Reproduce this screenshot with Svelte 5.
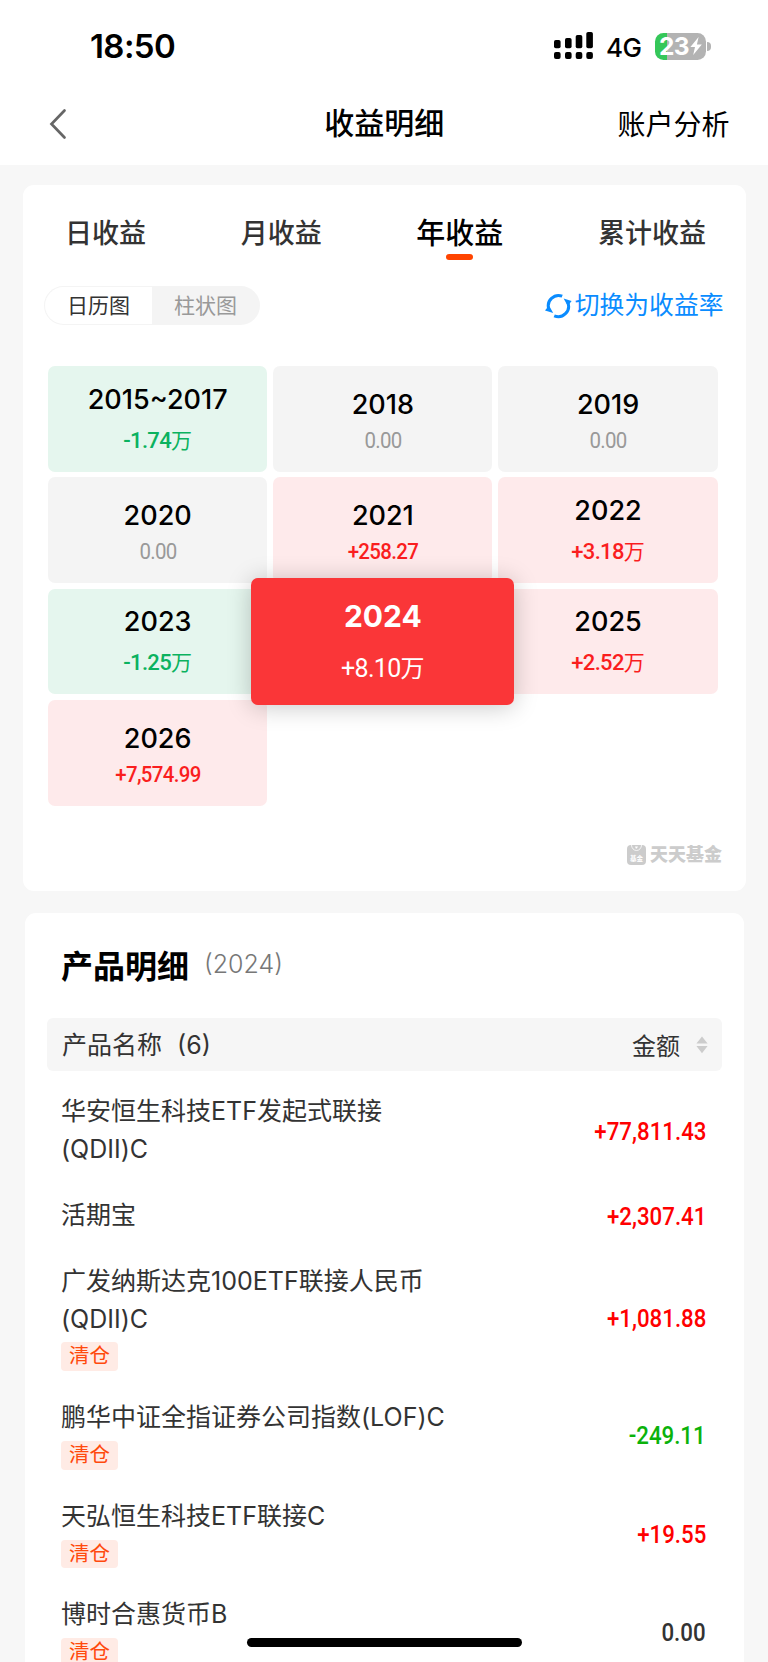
<script>
	let activeTab = "年收益";
	let chartMode = "日历图";
	let selectedYear = "2024";

	const tabs = ["日收益", "月收益", "年收益", "累计收益"];
	const modes = ["日历图", "柱状图"];

	const years = [
	  { label: "2015~2017", amount: "-1.74", unit: "万" },
	  { label: "2018", amount: "0.00" },
	  { label: "2019", amount: "0.00" },
	  { label: "2020", amount: "0.00" },
	  { label: "2021", amount: "+258.27" },
	  { label: "2022", amount: "+3.18", unit: "万" },
	  { label: "2023", amount: "-1.25", unit: "万" },
	  { label: "2024", amount: "+8.10", unit: "万" },
	  { label: "2025", amount: "+2.52", unit: "万" },
	  { label: "2026", amount: "+7,574.99" }
	];

	const products = [
	  { name: "华安恒生科技ETF发起式联接(QDII)C", amount: "+77,811.43" },
	  { name: "活期宝", amount: "+2,307.41" },
	  { name: "广发纳斯达克100ETF联接人民币(QDII)C", amount: "+1,081.88", cleared: true },
	  { name: "鹏华中证全指证券公司指数(LOF)C", amount: "-249.11", cleared: true },
	  { name: "天弘恒生科技ETF联接C", amount: "+19.55", cleared: true },
	  { name: "博时合惠货币B", amount: "0.00", cleared: true }
	];

	// "+" is a gain, "-" a loss, anything else is flat
	function trend(amount) {
	  if (amount.startsWith("+")) return "up";
	  if (amount.startsWith("-")) return "down";
	  return "flat";
	}
</script>

<main>
	<header>
	  <div class="status-bar">
		<span class="time">18:50</span>
		<div class="status-icons">
		  <svg class="signal" width="40" height="28" viewBox="0 0 40 28">
			<rect x="0" y="8" width="6.6" height="8.2" rx="1.8" />
			<rect x="11" y="6" width="6.6" height="10.2" rx="1.8" />
			<rect x="21.7" y="3" width="6.6" height="13.2" rx="1.8" />
			<rect x="32.3" y="0" width="6.6" height="16.2" rx="1.8" />
			<rect x="0" y="20" width="6.6" height="7" rx="2" />
			<rect x="11" y="20" width="6.6" height="7" rx="2" />
			<rect x="21.7" y="20" width="6.6" height="7" rx="2" />
			<rect x="32.3" y="20" width="6.6" height="7" rx="2" />
		  </svg>
		  <span class="network">4G</span>
		  <div class="battery">
			<div class="battery-body">
			  <span>23</span>
			  <svg width="12" height="18" viewBox="0 0 12 18">
				<path d="M8.6 0 L0.4 10 H5 L3.2 18 L11.8 7.4 H6.9 Z" fill="#fff" />
			  </svg>
			</div>
			<div class="battery-cap"></div>
		  </div>
		</div>
	  </div>
	  <div class="nav-bar">
		<button class="back" aria-label="返回">
		  <svg width="18" height="32" viewBox="0 0 18 32">
			<path d="M15.5 2.5 L2.5 16 L15.5 29.5" fill="none" stroke="#666" stroke-width="2.7" stroke-linecap="round" />
		  </svg>
		</button>
		<h1>收益明细</h1>
		<button class="analysis">账户分析</button>
	  </div>
	</header>

	<section class="card income">
	  <nav class="tabs">
		{#each tabs as tab}
		  <button class="tab" class:active={activeTab === tab} on:click={() => (activeTab = tab)}>{tab}</button>
		{/each}
	  </nav>

	  <div class="toolbar">
		<div class="modes">
		  {#each modes as mode}
			<button class="mode" class:active={chartMode === mode} on:click={() => (chartMode = mode)}>{mode}</button>
		  {/each}
		</div>
		<button class="switch">
		  <svg width="27" height="26" viewBox="0 0 27 26">
			<g fill="none" stroke="#0a8cff" stroke-width="3">
			  <path d="M3.8 16 A10.3 10.3 0 0 1 17.2 3.2" />
			  <path d="M22.8 9.5 A10.3 10.3 0 0 1 9.2 22.8" />
			</g>
			<path d="M0 17.6 L4 12.4 L8.2 20 Z" fill="#0a8cff" />
			<path d="M26.6 8 L18.6 5.4 L22.8 13 Z" fill="#0a8cff" />
		  </svg>
		  <span>切换为收益率</span>
		</button>
	  </div>

	  <div class="years">
		{#each years as year}
		  <button
			class="year {trend(year.amount)}"
			class:has-unit={year.unit}
			class:selected={selectedYear === year.label}
			on:click={() => (selectedYear = year.label)}
		  >
			<span class="label">{year.label}</span>
			<span class="value"><span class="num">{year.amount}</span>{#if year.unit}<span class="unit">{year.unit}</span>{/if}</span>
		  </button>
		{/each}
	  </div>

	  <div class="brand">
		<svg width="19" height="20" viewBox="0 0 19 20">
		  <rect width="19" height="20" rx="4" fill="#ccc" />
		  <path d="M4.5 0 A5 5.5 0 0 0 14.5 0" fill="none" stroke="#fff" stroke-width="0.8" />
		  <path d="M8 1.5 H11 L9.8 3.6 H8.8 Z" fill="#fff" />
		  <text x="9.5" y="15.6" font-size="6.5" font-weight="700" text-anchor="middle" fill="#fff">基金</text>
		</svg>
		<span>天天基金</span>
	  </div>
	</section>

	<section class="card products">
	  <h2>产品明细<small>({selectedYear})</small></h2>
	  <div class="table-head">
		<span class="column">产品名称<span class="count">({products.length})</span></span>
		<button class="sort">
		  金额
		  <svg width="12" height="18" viewBox="0 0 12 18">
			<path d="M6 0.5 L11.6 7.6 H0.4 Z M6 17.3 L11.6 10 H0.4 Z" fill="#ccc" />
		  </svg>
		</button>
	  </div>
	  <ul>
		{#each products as product}
		  <li>
			<div class="product">
			  <p>{product.name}</p>
			  {#if product.cleared}
				<span class="tag">清仓</span>
			  {/if}
			</div>
			<span class="amount {trend(product.amount)}">{product.amount}</span>
		  </li>
		{/each}
	  </ul>
	</section>

	<div class="home-indicator"></div>
</main>

<style>
	:global(body) {
	  background: #f7f7f7;
	}

	main {
	  position: relative;
	  width: 768px;
	  height: 1662px;
	  overflow: hidden;
	  background: #f7f7f7;
	  color: #000;
	  font-family: Inter, "Noto Sans CJK SC", sans-serif;
	}

	button {
	  padding: 0;
	  border: none;
	  background: none;
	  color: inherit;
	  font: inherit;
	  cursor: pointer;
	}

	svg {
	  display: block;
	  flex: none;
	}

	h1, h2, p, ul {
	  margin: 0;
	  padding: 0;
	}

	header {
	  height: 165px;
	  background: #fff;
	}

	.status-bar {
	  display: flex;
	  justify-content: space-between;
	  align-items: center;
	  height: 92px;
	  padding: 0 57px 0 90px;
	}

	.time {
	  font-size: 33px;
	  font-weight: 600;
	  letter-spacing: -0.6px;
	}

	.status-icons {
	  display: flex;
	  align-items: center;
	}

	.network {
	  margin: 2px 13px 0 12px;
	  font-size: 26px;
	  font-weight: 500;
	  letter-spacing: -0.5px;
	}

	.battery {
	  display: flex;
	  align-items: center;
	  gap: 1.5px;
	}

	.battery-body {
	  display: flex;
	  align-items: center;
	  justify-content: center;
	  gap: 1px;
	  box-sizing: border-box;
	  width: 51px;
	  height: 27px;
	  padding-left: 1px;
	  border-radius: 8.5px;
	  background: linear-gradient(90deg, #35c759 12px, #b3b3b3 12px);
	  color: #fff;
	  font-size: 24.5px;
	  font-weight: 700;
	  line-height: 27px;
	  letter-spacing: -0.5px;
	}

	.battery-cap {
	  width: 4px;
	  height: 9px;
	  border-radius: 0 4px 4px 0;
	  background: #b3b3b3;
	}

	.nav-bar {
	  display: grid;
	  grid-template-columns: 1fr auto 1fr;
	  align-items: center;
	  height: 64px;
	  padding: 0 38.5px 0 49px;
	}

	.back {
	  justify-self: start;
	}

	h1 {
	  margin-right: 10px;
	  padding-bottom: 3px;
	  font-size: 30px;
	  font-weight: 500;
	  line-height: 44px;
	}

	.analysis {
	  justify-self: end;
	  padding-bottom: 2px;
	  font-size: 28px;
	}

	.card {
	  border-radius: 11px;
	  background: #fff;
	}

	.income {
	  box-sizing: border-box;
	  width: 723px;
	  height: 706px;
	  margin: 20px 0 0 23px;
	  padding-top: 25.5px;
	}

	.tabs {
	  display: flex;
	  justify-content: space-between;
	  align-items: center;
	  height: 46px;
	  padding: 0 40px 0 42px;
	}

	.tab {
	  color: #333;
	  font-size: 27px;
	  font-weight: 500;
	  line-height: 46px;
	}

	.tab.active {
	  position: relative;
	  color: #000;
	  font-size: 29px;
	}

	.tab.active::after {
	  content: "";
	  position: absolute;
	  left: 50%;
	  bottom: -3.5px;
	  width: 27px;
	  height: 6px;
	  margin-left: -13.5px;
	  border-radius: 3px;
	  background: #ff4400;
	}

	.toolbar {
	  display: flex;
	  justify-content: space-between;
	  align-items: center;
	  margin-top: 29.5px;
	  padding: 0 22.5px 0 21px;
	}

	.modes {
	  display: flex;
	  box-sizing: border-box;
	  width: 216px;
	  height: 39px;
	  padding: 1px;
	  border-radius: 20px;
	  background: #f4f4f4;
	}

	.mode {
	  flex: 1;
	  color: #999;
	  font-size: 21px;
	  line-height: 36px;
	}

	.mode.active {
	  border-radius: 19px 0 0 19px;
	  background: #fff;
	  color: #333;
	}

	.switch {
	  display: flex;
	  align-items: center;
	  gap: 3px;
	  color: #0a8cff;
	  font-size: 24.8px;
	  line-height: 39px;
	}

	.years {
	  display: grid;
	  grid-template-columns: repeat(3, 219.3px);
	  grid-auto-rows: 105.7px;
	  gap: 5.6px 5.9px;
	  margin: 41px 0 0 25px;
	}

	.year {
	  display: flex;
	  flex-direction: column;
	  align-items: center;
	  justify-content: flex-end;
	  padding-bottom: 16px;
	  border-radius: 7px;
	  background: #f4f4f4;
	}

	.year.up {
	  background: #feeaeb;
	}

	.year.down {
	  background: #e5f6ee;
	}

	.label {
	  margin-bottom: 6px;
	  font-size: 27px;
	  font-weight: 500;
	  line-height: 30px;
	}

	.has-unit .label {
	  margin-bottom: 11px;
	}

	.value {
	  display: flex;
	  align-items: center;
	  color: #999;
	  font-size: 21px;
	  line-height: 30px;
	}

	.num {
	  font-family: Roboto, sans-serif;
	  font-size: 22px;
	  font-weight: 500;
	  letter-spacing: -0.7px;
	  transform: scaleX(0.93);
	}

	.has-unit .num {
	  transform: none;
	}

	.flat .num {
	  font-weight: 400;
	}

	.up .value {
	  color: #fa1e1e;
	}

	.down .value {
	  color: #0bb25f;
	}

	.year.selected {
	  z-index: 1;
	  margin: -10.5px -22px;
	  padding-bottom: 20.5px;
	  background: #fa3638;
	  box-shadow: 0 2px 24px rgba(0, 0, 0, 0.22);
	}

	.selected .label {
	  margin-bottom: 23.5px;
	  color: #fff;
	  font-size: 30px;
	  font-weight: 700;
	}

	.selected .value {
	  color: #fff;
	  font-size: 24px;
	}

	.selected .num {
	  font-size: 25px;
	  font-weight: 400;
	}

	.brand {
	  display: flex;
	  justify-content: flex-end;
	  align-items: center;
	  gap: 4px;
	  margin-top: 36px;
	  padding-right: 24px;
	  color: #ccc;
	  font-size: 18px;
	  font-weight: 900;
	  line-height: 26px;
	}

	.products {
	  width: 719px;
	  height: 800px;
	  margin: 22px 0 0 25px;
	}

	h2 {
	  display: flex;
	  align-items: center;
	  box-sizing: border-box;
	  height: 105px;
	  padding: 0 0 4px 36px;
	  font-size: 32px;
	  font-weight: 700;
	}

	h2 small {
	  margin-left: 15px;
	  color: #777;
	  font-size: 25px;
	  font-weight: 300;
	}

	.table-head {
	  display: flex;
	  justify-content: space-between;
	  align-items: center;
	  height: 53px;
	  margin: 0 22px;
	  padding: 0 14px 0 15px;
	  border-radius: 6px;
	  background: #f6f6f6;
	  color: #333;
	  font-size: 25px;
	}

	.column {
	  padding-bottom: 3px;
	}

	.count {
	  margin-left: 15px;
	}

	.sort {
	  display: flex;
	  align-items: center;
	  gap: 16px;
	  font-size: 24px;
	}

	ul {
	  margin-top: 8px;
	  list-style: none;
	}

	li {
	  display: flex;
	  justify-content: space-between;
	  align-items: center;
	  padding: 14.2px 38px 14.2px 36px;
	}

	.product {
	  width: 400px;
	  color: #333;
	  font-size: 25px;
	  line-height: 37.7px;
	}

	.product p {
	  word-break: keep-all;
	  overflow-wrap: anywhere;
	}

	.tag {
	  display: block;
	  width: 57px;
	  height: 28.5px;
	  margin-top: 4px;
	  border-radius: 4px;
	  background: #ffebe5;
	  color: #ff4a0d;
	  font-size: 20.5px;
	  line-height: 27px;
	  text-align: center;
	}

	.amount {
	  color: #333;
	  font-family: Roboto, sans-serif;
	  font-size: 26.5px;
	  font-weight: 500;
	  transform: scaleX(0.84);
	  transform-origin: right;
	}

	.amount.up {
	  color: #ff0000;
	}

	.amount.down {
	  color: #0bb20b;
	}

	.home-indicator {
	  position: absolute;
	  left: 247px;
	  bottom: 15px;
	  width: 275px;
	  height: 9px;
	  border-radius: 5px;
	  background: #000;
	}
</style>
